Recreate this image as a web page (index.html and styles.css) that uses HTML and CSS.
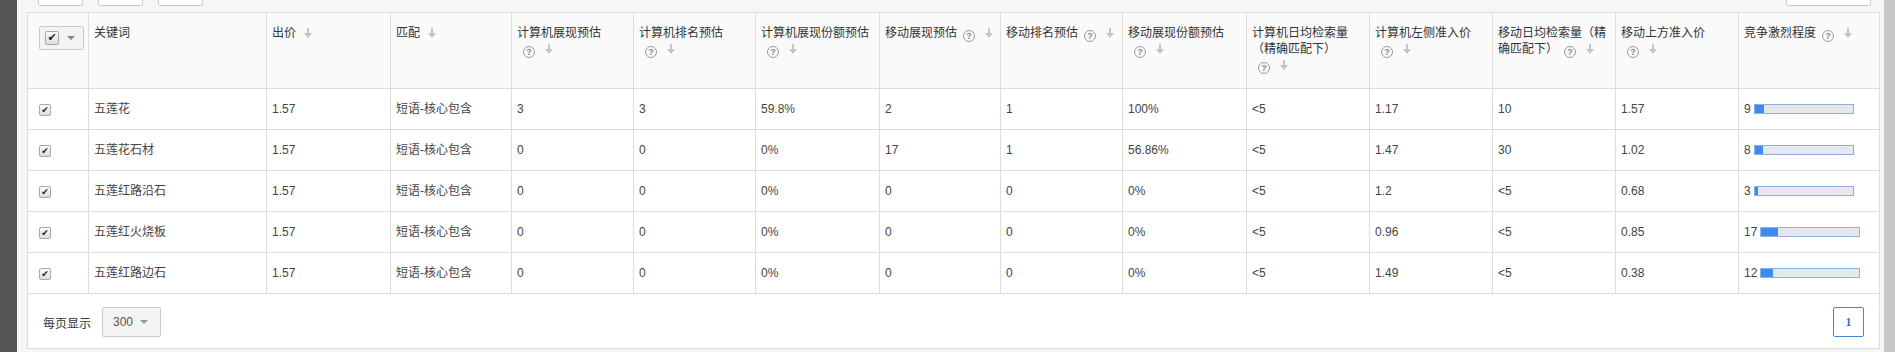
FILE: index.html
```html
<!DOCTYPE html>
<html lang="zh">
<head>
<meta charset="utf-8">
<title>关键词</title>
<link rel="stylesheet" href="styles.css">
</head>
<body>
<div class="app">
  <div class="sidebar"></div>
  <div class="main">
    <div class="toolbar">
      <div class="tool-left">
        <span class="tbtn"></span><span class="tbtn"></span><span class="tbtn"></span>
      </div>
      <span class="tbtn wide"></span>
    </div>
    <table class="grid">
      <colgroup>
        <col class="c61"><col class="c178"><col class="c124"><col class="c121"><col class="c122"><col class="c122"><col class="c124"><col class="c121"><col class="c122"><col class="c124"><col class="c123"><col class="c123"><col class="c123"><col class="c123"><col class="c141">
      </colgroup>
      <thead>
        <tr>
          <th class="chk-cell"><span class="chk-btn"><span class="cb big">&#10004;</span><span class="caret"></span></span></th>
          <th>关键词</th>
          <th>出价<i class="arr"></i></th>
          <th>匹配<i class="arr"></i></th>
          <th>计算机展现预估<span class="ic"><i class="q">?</i><i class="arr"></i></span></th>
          <th>计算机排名预估<span class="ic"><i class="q">?</i><i class="arr"></i></span></th>
          <th>计算机展现份额预估<span class="ic"><i class="q">?</i><i class="arr"></i></span></th>
          <th>移动展现预估<span class="ic"><i class="q">?</i><i class="arr"></i></span></th>
          <th>移动排名预估<span class="ic"><i class="q">?</i><i class="arr"></i></span></th>
          <th>移动展现份额预估<span class="ic"><i class="q">?</i><i class="arr"></i></span></th>
          <th>计算机日均检索量（精确匹配下）<span class="ic"><i class="q">?</i><i class="arr"></i></span></th>
          <th>计算机左侧准入价<span class="ic"><i class="q">?</i><i class="arr"></i></span></th>
          <th>移动日均检索量（精确匹配下）<span class="ic"><i class="q">?</i><i class="arr"></i></span></th>
          <th>移动上方准入价<span class="ic"><i class="q">?</i><i class="arr"></i></span></th>
          <th>竞争激烈程度<span class="ic"><i class="q">?</i><i class="arr"></i></span></th>
        </tr>
      </thead>
      <tbody>
        <tr>
          <td class="chk-cell"><span class="cb">&#10004;</span></td>
          <td>五莲花</td><td>1.57</td><td>短语-核心包含</td><td>3</td><td>3</td><td>59.8%</td><td>2</td><td>1</td><td>100%</td><td>&lt;5</td><td>1.17</td><td>10</td><td>1.57</td>
          <td>9<span class="bar"><span class="fill" style="width:9%"></span></span></td>
        </tr>
        <tr>
          <td class="chk-cell"><span class="cb">&#10004;</span></td>
          <td>五莲花石材</td><td>1.57</td><td>短语-核心包含</td><td>0</td><td>0</td><td>0%</td><td>17</td><td>1</td><td>56.86%</td><td>&lt;5</td><td>1.47</td><td>30</td><td>1.02</td>
          <td>8<span class="bar"><span class="fill" style="width:8%"></span></span></td>
        </tr>
        <tr>
          <td class="chk-cell"><span class="cb">&#10004;</span></td>
          <td>五莲红路沿石</td><td>1.57</td><td>短语-核心包含</td><td>0</td><td>0</td><td>0%</td><td>0</td><td>0</td><td>0%</td><td>&lt;5</td><td>1.2</td><td>&lt;5</td><td>0.68</td>
          <td>3<span class="bar"><span class="fill" style="width:3%"></span></span></td>
        </tr>
        <tr>
          <td class="chk-cell"><span class="cb">&#10004;</span></td>
          <td>五莲红火烧板</td><td>1.57</td><td>短语-核心包含</td><td>0</td><td>0</td><td>0%</td><td>0</td><td>0</td><td>0%</td><td>&lt;5</td><td>0.96</td><td>&lt;5</td><td>0.85</td>
          <td>17<span class="bar"><span class="fill" style="width:17%"></span></span></td>
        </tr>
        <tr>
          <td class="chk-cell"><span class="cb">&#10004;</span></td>
          <td>五莲红路边石</td><td>1.57</td><td>短语-核心包含</td><td>0</td><td>0</td><td>0%</td><td>0</td><td>0</td><td>0%</td><td>&lt;5</td><td>1.49</td><td>&lt;5</td><td>0.38</td>
          <td>12<span class="bar"><span class="fill" style="width:12%"></span></span></td>
        </tr>
      </tbody>
    </table>
    <div class="footer">
      <div class="per-page">
        <span class="pp-label">每页显示</span>
        <span class="select">300<span class="caret"></span></span>
      </div>
      <span class="page">1</span>
    </div>
  </div>
  <div class="scrollbar"></div>
</div>
</body>
</html>
```

FILE: styles.css
```css
html, body {
  margin: 0;
  padding: 0;
  background: #f5f5f5;
}
body {
  font-family: "Liberation Sans", "Noto Sans CJK SC", sans-serif;
  font-size: 12px;
  color: #333;
}
.app {
  display: flex;
  height: 352px;
  overflow: hidden;
}
.sidebar {
  width: 17px;
  flex: none;
  background: #565656;
}
.main {
  flex: 1;
  padding: 0 4px 0 10px;
  background: #f6f6f6;
}
.scrollbar {
  width: 12px;
  flex: none;
  background: #c6c6c6;
}
.toolbar {
  height: 12px;
  display: flex;
  justify-content: space-between;
  align-items: flex-end;
  overflow: hidden;
  padding: 0 9px 0 11px;
}
.tool-left {
  display: flex;
  gap: 15px;
  height: 12px;
  align-items: flex-end;
  padding-bottom: 6px;
  box-sizing: border-box;
}
.tbtn {
  display: block;
  width: 45px;
  height: 30px;
  box-sizing: border-box;
  border: 1px solid #ccc;
  border-radius: 2px;
  background: #fff;
}
.toolbar > .tbtn {
  margin-bottom: 6px;
}
.tbtn.wide {
  width: 85px;
}
.grid {
  width: 100%;
  border-collapse: collapse;
  table-layout: fixed;
  background: #fff;
}
.c61 { width: 61px; }
.c178 { width: 178px; }
.c124 { width: 124px; }
.c121 { width: 121px; }
.c122 { width: 122px; }
.c123 { width: 123px; }
.c141 { width: 141px; }
.grid th, .grid td {
  border: 1px solid #dcdcdc;
  padding: 0 5px;
  text-align: left;
  font-weight: normal;
  overflow: hidden;
}
.grid thead tr {
  height: 76px;
}
.grid th {
  background: #fafafa;
  vertical-align: top;
  padding-top: 12px;
  line-height: 16px;
  color: #333;
}
.grid tbody tr {
  height: 41px;
}
.grid td {
  vertical-align: middle;
  color: #444;
  line-height: 16px;
}
.grid td:first-child, .grid th:first-child {
  padding-left: 11px;
}
.chk-btn {
  display: inline-flex;
  align-items: center;
  width: 45px;
  height: 24px;
  box-sizing: border-box;
  border: 1px solid #c8c8c8;
  border-radius: 2px;
  background: #f3f3f3;
  padding-left: 5px;
  margin-top: 1px;
}
.cb {
  display: inline-block;
  width: 12px;
  height: 12px;
  box-sizing: border-box;
  border: 1px solid #a9a9a9;
  border-radius: 2px;
  background: linear-gradient(#fdfdfd, #dcdcdc);
  color: #222;
  font-size: 9px;
  line-height: 10px;
  text-align: center;
  vertical-align: middle;
  font-family: "DejaVu Sans", sans-serif;
}
.cb.big {
  width: 14px;
  height: 14px;
  font-size: 11px;
  line-height: 12px;
}
.caret {
  display: inline-block;
  width: 0;
  height: 0;
  border-left: 4px solid transparent;
  border-right: 4px solid transparent;
  border-top: 4px solid #888;
  margin-left: 8px;
  vertical-align: middle;
}
.ic {
  display: inline-block;
  white-space: nowrap;
  margin-left: 6px;
}
.q {
  display: inline-block;
  width: 12px;
  height: 12px;
  box-sizing: border-box;
  border: 1px solid #9a9a9a;
  border-radius: 50%;
  font-style: normal;
  font-size: 9px;
  line-height: 10px;
  text-align: center;
  color: #888;
  font-weight: bold;
  vertical-align: -2px;
  font-family: "Liberation Sans", sans-serif;
}
.arr {
  display: inline-block;
  position: relative;
  width: 8px;
  height: 10px;
  margin-left: 8px;
  vertical-align: -1px;
}
.arr::before {
  content: "";
  position: absolute;
  left: 3px;
  top: 0;
  width: 2px;
  height: 5px;
  background: #c4c4c4;
}
.arr::after {
  content: "";
  position: absolute;
  left: 0;
  top: 5px;
  border-left: 4px solid transparent;
  border-right: 4px solid transparent;
  border-top: 5px solid #c4c4c4;
}
.ic .arr {
  margin-left: 10px;
}
.bar {
  display: inline-block;
  width: 100px;
  height: 10px;
  box-sizing: border-box;
  border: 1px solid #8fb0dc;
  background: #e4e7ec;
  margin-left: 3px;
  vertical-align: -1px;
}
.fill {
  display: block;
  height: 100%;
  background: #3d8bf5;
}
.footer {
  display: flex;
  justify-content: space-between;
  align-items: center;
  background: #fff;
  border: 1px solid #dcdcdc;
  border-top: none;
  padding: 13px 15px 11px;
}
.per-page {
  display: flex;
  align-items: center;
}
.pp-label {
  color: #333;
  margin-right: 11px;
}
.select {
  display: inline-flex;
  align-items: center;
  width: 59px;
  height: 30px;
  box-sizing: border-box;
  border: 1px solid #cacaca;
  border-radius: 2px;
  background: #f4f4f4;
  padding-left: 10px;
  color: #555;
  font-size: 12px;
}
.select .caret {
  margin-left: 7px;
  border-top-color: #999;
}
.page {
  display: inline-flex;
  align-items: center;
  justify-content: center;
  width: 31px;
  height: 30px;
  box-sizing: border-box;
  border: 1px solid #4a86d8;
  border-radius: 2px;
  color: #3a74c8;
  font-weight: bold;
  font-family: "Liberation Serif", serif;
  font-size: 12px;
}
```
